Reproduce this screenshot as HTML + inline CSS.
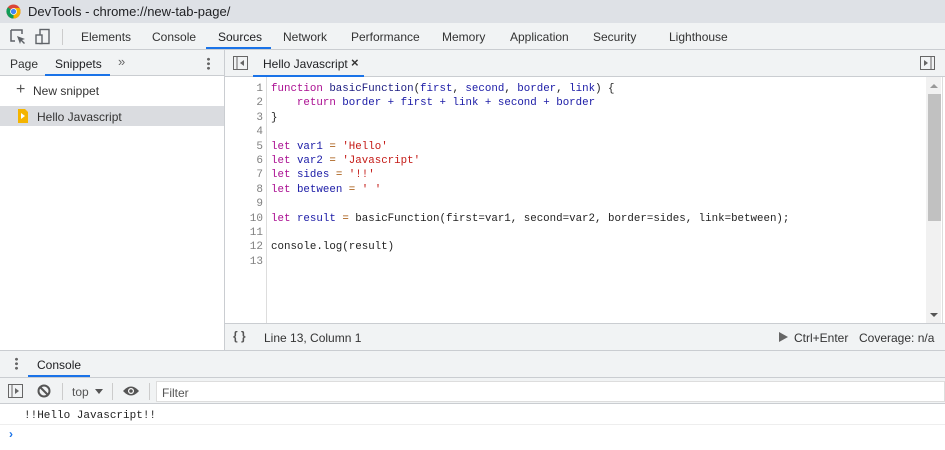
<!DOCTYPE html>
<html><head><style>
*{margin:0;padding:0;box-sizing:border-box}
body{width:945px;height:450px;overflow:hidden;background:#fff;font-family:"Liberation Sans",sans-serif;font-size:12px;color:#333;position:relative}
.abs{position:absolute}
.mono{font-family:"Liberation Mono",monospace;font-size:11px}
.k{color:#aa0d91}.v{color:#1a1aa6}.s{color:#c41a16}.o{color:#a14e00}.f{color:#1c1c80}
</style></head><body>
<div class="abs" style="left:0;top:0;width:945px;height:23px;background:#dee1e6"></div>
<svg class="abs" style="left:6px;top:4px" width="15" height="15" viewBox="0 0 16 16"><circle cx="8" cy="8" r="7.5" fill="#db4437"/><path d="M8 8 L1.5 11.7 A7.5 7.5 0 0 0 8 15.5 Z" fill="#0f9d58"/><path d="M8 8 L8 15.5 A7.5 7.5 0 0 0 14.5 4.3 L8 4.3Z" fill="#f4b400"/><path d="M8 8 L1.5 11.7 A7.5 7.5 0 0 1 2 3.5 Z" fill="#0f9d58"/><circle cx="8" cy="8" r="3.6" fill="#fff"/><circle cx="8" cy="8" r="2.8" fill="#4285f4"/></svg>
<div class="abs" style="left:28px;top:4px;font-size:13px;color:#202124">DevTools - chrome://new-tab-page/</div>
<div class="abs" style="left:0;top:23px;width:945px;height:27px;background:#f1f3f4;border-bottom:1px solid #cacdd1"></div>
<svg class="abs" style="left:9px;top:28px" width="18" height="18" viewBox="0 0 18 18"><path d="M2 2h11v4M2 2v11h4" fill="none" stroke="#5f6368" stroke-width="1.5"/><path d="M8 8l8 3-3 1 3 3-1 1-3-3-1 3z" fill="#5f6368"/></svg>
<svg class="abs" style="left:34px;top:28px" width="18" height="18" viewBox="0 0 18 18"><rect x="6" y="1.5" width="9" height="14" fill="none" stroke="#5f6368" stroke-width="1.4"/><rect x="2" y="7" width="6" height="8.5" fill="#f1f3f4" stroke="#5f6368" stroke-width="1.4"/></svg>
<div class="abs" style="left:62px;top:29px;width:1px;height:16px;background:#ccc"></div>
<div class="abs" style="top:30px;left:81px;color:#333">Elements</div>
<div class="abs" style="top:30px;left:152px;color:#333">Console</div>
<div class="abs" style="top:30px;left:218px;color:#202124">Sources</div>
<div class="abs" style="left:206px;top:47px;width:65px;height:2px;background:#1a73e8"></div>
<div class="abs" style="top:30px;left:283px">Network</div>
<div class="abs" style="top:30px;left:351px">Performance</div>
<div class="abs" style="top:30px;left:442px">Memory</div>
<div class="abs" style="top:30px;left:510px">Application</div>
<div class="abs" style="top:30px;left:593px">Security</div>
<div class="abs" style="top:30px;left:669px">Lighthouse</div>
<div class="abs" style="left:0;top:50px;width:225px;height:300px;border-right:1px solid #cacdd1"></div>
<div class="abs" style="left:0;top:50px;width:224px;height:26px;background:#f1f3f4;border-bottom:1px solid #cacdd1"></div>
<div class="abs" style="top:57px;left:10px">Page</div>
<div class="abs" style="top:57px;left:55px;color:#202124">Snippets</div>
<div class="abs" style="left:45px;top:74px;width:65px;height:2px;background:#1a73e8"></div>
<div class="abs" style="top:54px;left:118px;color:#666;font-size:13px">»</div>
<div class="abs" style="left:207px;top:57px;width:3px;height:13px;background:radial-gradient(circle,#666 1.3px,transparent 1.6px) 0 0/3px 4.5px"></div>
<div class="abs" style="top:83px;left:16px;font-size:16px;color:#555;line-height:14px">+</div>
<div class="abs" style="top:84px;left:33px;color:#333">New snippet</div>
<div class="abs" style="left:0;top:106px;width:224px;height:20px;background:#dadce0"></div>
<svg class="abs" style="left:18px;top:109px" width="10" height="14" viewBox="0 0 10 14"><path d="M0 0h7l3 3v11H0z" fill="#f4b400"/><path d="M3 4l4 3-4 3z" fill="#fff"/></svg>
<div class="abs" style="top:110px;left:37px;color:#333">Hello Javascript</div>
<div class="abs" style="left:225px;top:50px;width:720px;height:27px;background:#f1f3f4;border-bottom:1px solid #cacdd1"></div>
<svg class="abs" style="left:233px;top:56px" width="15" height="14" viewBox="0 0 15 14"><rect x="0.5" y="0.5" width="14" height="13" fill="none" stroke="#666"/><path d="M4 1v12" stroke="#666"/><path d="M11 4l-4 3 4 3z" fill="#666"/></svg>
<div class="abs" style="top:57px;left:263px;color:#202124">Hello Javascript</div>
<div class="abs" style="top:55px;left:351px;font-size:13px;color:#333;font-weight:bold">×</div>
<div class="abs" style="left:253px;top:75px;width:111px;height:2px;background:#1a73e8"></div>
<svg class="abs" style="left:920px;top:56px" width="15" height="14" viewBox="0 0 15 14"><rect x="0.5" y="0.5" width="14" height="13" fill="none" stroke="#666"/><path d="M11 1v12" stroke="#666"/><path d="M4 4l4 3-4 3z" fill="#666"/></svg>
<div class="abs" style="left:266px;top:77px;width:1px;height:246px;background:#ddd"></div>
<div class="abs mono" style="left:226px;top:82px;width:37px;text-align:right;color:#808080;line-height:14.4px">1<br>2<br>3<br>4<br>5<br>6<br>7<br>8<br>9<br>10<br>11<br>12<br>13</div>
<pre class="abs mono" style="left:271px;top:82px;line-height:14.4px;color:#222;font-size:10.8px"><span class="k">function</span> <span class="f">basicFunction</span>(<span class="v">first</span>, <span class="v">second</span>, <span class="v">border</span>, <span class="v">link</span>) {
    <span class="k">return</span> <span class="v">border</span> <span class="v">+</span> <span class="v">first</span> <span class="v">+</span> <span class="v">link</span> <span class="v">+</span> <span class="v">second</span> <span class="v">+</span> <span class="v">border</span>
}

<span class="k">let</span> <span class="v">var1</span> <span class="o">=</span> <span class="s">'Hello'</span>
<span class="k">let</span> <span class="v">var2</span> <span class="o">=</span> <span class="s">'Javascript'</span>
<span class="k">let</span> <span class="v">sides</span> <span class="o">=</span> <span class="s">'!!'</span>
<span class="k">let</span> <span class="v">between</span> <span class="o">=</span> <span class="s">' '</span>

<span class="k">let</span> <span class="v">result</span> <span class="o">=</span> basicFunction(first=var1, second=var2, border=sides, link=between);

console.log(result)
</pre>
<div class="abs" style="left:926px;top:77px;width:15px;height:246px;background:#f1f1f1"></div>
<div class="abs" style="left:928px;top:94px;width:13px;height:127px;background:#c1c1c1"></div>
<div class="abs" style="left:930px;top:84px;width:0;height:0;border:4px solid transparent;border-bottom:4px solid #999;border-top:0"></div>
<div class="abs" style="left:930px;top:313px;width:0;height:0;border:4px solid transparent;border-top:4px solid #555;border-bottom:0"></div>
<div class="abs" style="left:942px;top:77px;width:1px;height:246px;background:#ddd"></div>
<div class="abs" style="left:225px;top:323px;width:720px;height:27px;background:#f1f3f4;border-top:1px solid #cacdd1"></div>
<div class="abs" style="top:329px;left:233px;font-weight:bold;color:#555;font-size:12px">{ }</div>
<div class="abs" style="top:331px;left:264px;color:#333">Line 13, Column 1</div>
<div class="abs" style="left:779px;top:332px;width:0;height:0;border:5px solid transparent;border-left:9px solid #666;border-right:0"></div>
<div class="abs" style="top:331px;left:794px;color:#333">Ctrl+Enter</div>
<div class="abs" style="top:331px;left:859px;color:#333">Coverage: n/a</div>
<div class="abs" style="left:0;top:350px;width:945px;height:28px;background:#f1f3f4;border-top:1px solid #cacdd1;border-bottom:1px solid #cacdd1"></div>
<div class="abs" style="left:15px;top:357px;width:3px;height:13px;background:radial-gradient(circle,#666 1.3px,transparent 1.6px) 0 0/3px 4.5px"></div>
<div class="abs" style="top:358px;left:37px;color:#202124">Console</div>
<div class="abs" style="left:28px;top:375px;width:62px;height:2px;background:#1a73e8"></div>
<div class="abs" style="left:0;top:378px;width:945px;height:26px;background:#f1f3f4;border-bottom:1px solid #cacdd1"></div>
<svg class="abs" style="left:8px;top:384px" width="15" height="14" viewBox="0 0 15 14"><rect x="0.5" y="0.5" width="14" height="13" fill="none" stroke="#666"/><path d="M4 1v12" stroke="#666"/><path d="M7 4l4 3-4 3z" fill="#666"/></svg>
<svg class="abs" style="left:37px;top:384px" width="14" height="14" viewBox="0 0 14 14"><circle cx="7" cy="7" r="5.5" fill="none" stroke="#555" stroke-width="2"/><path d="M3 3l8 8" stroke="#555" stroke-width="2"/></svg>
<div class="abs" style="left:62px;top:383px;width:1px;height:17px;background:#ccc"></div>
<div class="abs" style="top:385px;left:72px;color:#555">top</div>
<div class="abs" style="left:95px;top:389px;border:4px solid transparent;border-top:5px solid #555;border-bottom:0"></div>
<div class="abs" style="left:112px;top:383px;width:1px;height:17px;background:#ccc"></div>
<svg class="abs" style="left:122px;top:385px" width="18" height="12" viewBox="0 0 18 12"><path d="M1 6Q9 -3 17 6Q9 15 1 6z" fill="#555"/><circle cx="9" cy="6" r="3" fill="#fff"/><circle cx="9" cy="6" r="1.8" fill="#555"/></svg>
<div class="abs" style="left:149px;top:383px;width:1px;height:17px;background:#ccc"></div>
<div class="abs" style="left:156px;top:381px;width:789px;height:21px;background:#fff;border:1px solid #ddd"></div>
<div class="abs" style="top:386px;left:162px;color:#555">Filter</div>
<div class="abs mono" style="top:410px;left:24px;color:#222">!!Hello Javascript!!</div>
<div class="abs" style="left:0;top:424px;width:945px;height:1px;background:#eee"></div>
<div class="abs" style="top:427px;left:9px;color:#1a73e8;font-weight:bold;font-size:12px">›</div>
</body></html>
